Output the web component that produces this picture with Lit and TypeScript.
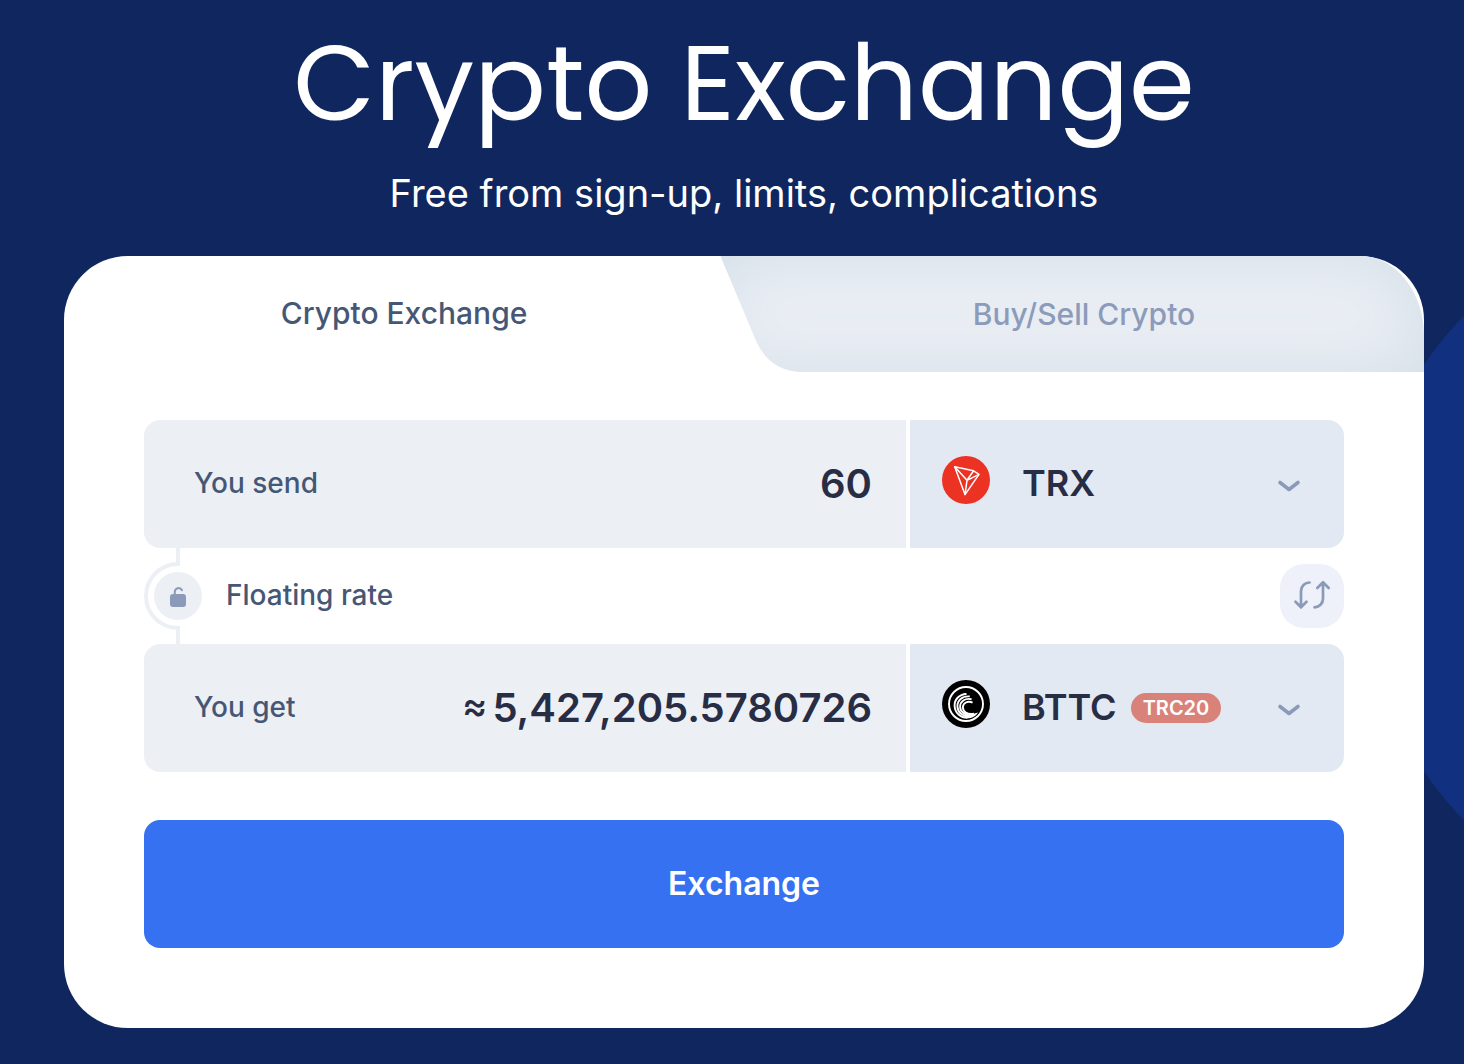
import { LitElement, html, css, svg } from "lit";
import { customElement, property, state } from "lit/decorators.js";

const tronLogo = svg`
  <circle cx="24" cy="24" r="24" fill="#eb3223" />
  <g fill="none" stroke="#fff" stroke-width="1.5" stroke-linejoin="round">
    <path d="M12.7 10.8 31.6 14.8 37 18.4 23 38.6Z" />
    <path d="M12.7 10.8 25 24.3 31.6 14.8M25 24.3 37 18.4M25 24.3 23 38.6" />
  </g>`;

const bttcLogo = svg`
  <circle cx="24" cy="24" r="24" fill="#000" />
  <circle cx="24" cy="24" r="17" fill="none" stroke="#fff" stroke-width="1.9" />
  <g fill="none" stroke="#fff" stroke-width="1.9">
    <path d="M24.5 14C17 14.4 12.2 19.6 12.6 26 13 33 18.4 37.8 25.5 37.8" />
    <path d="M27.8 16.4C20 15.8 15.2 20.6 15.4 26.4 15.6 32.4 20.8 36.8 27.5 36.6" />
    <path d="M29.6 19.2C22.8 17.8 18.1 21.6 18.1 26.8 18.1 31.8 23 35.8 30 35" />
    <path d="M30.6 22.6C25.6 20.6 21 22.8 20.9 27.2 20.8 31.4 25 34.8 32 33.6" />
  </g>
  <path d="M21.5 29.5C23.5 33.4 29 35 36 32.4 33.4 36.8 28.4 39 23 38Z" fill="#fff" />`;

@customElement("currency-picker")
export class CurrencyPicker extends LitElement {
  @property() code = "";
  @property() network = "";
  @property() label = "";

  static styles = css`
    :host {
      display: flex;
      align-items: center;
      min-width: 0;
      padding: 0 43px 0 32px;
      background: #e2e9f3;
      border-radius: 0 16px 16px 0;
    }
    .logo {
      flex: none;
      width: 48px;
      height: 48px;
      margin: 0 32px 8px 0;
    }
    select {
      appearance: none;
      field-sizing: content;
      margin: 0;
      padding: 0 0 2px;
      border: 0;
      background: none;
      color: #272d45;
      font: 600 36px/48px Inter, "Liberation Sans", sans-serif;
      cursor: pointer;
    }
    .network {
      margin-left: 14px;
      padding: 0 12px;
      border-radius: 15px;
      background: #d9827a;
      color: #fff;
      font: 600 20px/30px Inter, "Liberation Sans", sans-serif;
    }
    .chevron {
      flex: none;
      width: 24px;
      height: 14px;
      margin: 4px 0 0 auto;
    }
  `;

  render() {
    return html`
      <svg class="logo" viewBox="0 0 48 48" aria-hidden="true">
        ${this.code === "TRX" ? tronLogo : bttcLogo}
      </svg>
      <select aria-label=${this.label}>
        <option>${this.code}</option>
      </select>
      ${this.network ? html`<span class="network">${this.network}</span>` : ""}
      <svg class="chevron" viewBox="0 0 24 14" aria-hidden="true">
        <path d="M3 3.5 12 10.5 21 3.5" fill="none" stroke="#8b9ab8" stroke-width="3.6"
          stroke-linecap="round" stroke-linejoin="round" />
      </svg>
    `;
  }
}

@customElement("app-root")
export class AppRoot extends LitElement {
  @state() private amount = "60";

  static styles = css`
    :host {
      display: block;
      box-sizing: border-box;
      min-height: 100vh;
      padding: 23px 40px 36px 64px;
      background:
        radial-gradient(
          circle at calc(100% + 259px) 568px,
          #123080 361px,
          transparent 362px
        ),
        #10265e;
      color: #fff;
      font-family: Inter, "Liberation Sans", sans-serif;
    }
    * {
      box-sizing: border-box;
    }
    button,
    input {
      margin: 0;
      border: 0;
      font-family: inherit;
    }
    button {
      cursor: pointer;
    }
    header {
      text-align: center;
    }
    h1 {
      margin: 0;
      font: 400 106px/120px Poppins, Inter, "Liberation Sans", sans-serif;
    }
    .tagline {
      margin: 24px 0 0;
      font-size: 38px;
      line-height: 52px;
    }
    .card {
      margin-top: 37px;
      border-radius: 64px;
      background: #fff;
    }
    .tabs {
      display: grid;
      grid-template-columns: 1fr 1fr;
      height: 116px;
    }
    .tab {
      padding: 0 0 2px;
      background: none;
      color: #465776;
      font-size: 30px;
      font-weight: 500;
      line-height: 40px;
    }
    .tab-idle {
      display: flex;
      align-items: center;
      margin-left: -24px;
      padding: 0;
      border-top-right-radius: 64px 80px;
      background: #ebeff4;
      box-shadow: inset 0 0 72px #d3dee8;
      color: #8c9bb9;
    }
    .slant {
      flex: none;
      width: 84px;
      height: 116px;
    }
    .tab-label {
      flex: 1;
      padding-right: 60px;
    }
    .form {
      display: flex;
      flex-direction: column;
      padding: 48px 80px 80px;
    }
    .row {
      display: grid;
      grid-template-columns: minmax(0, 381fr) minmax(0, 217fr);
      gap: 4px;
      height: 128px;
    }
    .field {
      display: flex;
      align-items: center;
      padding: 0 34px 0 50px;
      border-radius: 16px 0 0 16px;
      background: #eceff4;
      color: #272d45;
    }
    label,
    .rate {
      color: #465776;
      font-size: 28px;
      font-weight: 500;
      line-height: 40px;
    }
    label,
    .rate-label {
      padding-bottom: 2px;
    }
    .amount {
      flex: 1;
      min-width: 0;
      padding: 0;
      background: none;
      color: #272d45;
      font-size: 40px;
      font-weight: 600;
      line-height: 48px;
      text-align: right;
    }
    .approx {
      margin-right: 5px;
      font-size: 38px;
      font-weight: 500;
      font-feature-settings: "case";
    }
    .middle {
      display: flex;
      align-items: center;
      height: 96px;
    }
    .rate {
      display: flex;
      align-items: center;
      gap: 24px;
      padding: 0;
      background: none;
    }
    .link {
      display: block;
      width: 58px;
      height: 96px;
    }
    .swap {
      width: 64px;
      height: 64px;
      margin-left: auto;
      padding: 0;
      border-radius: 24px;
      background: #eef1f9;
    }
    .swap svg {
      display: block;
    }
    .submit {
      height: 128px;
      margin-top: 48px;
      padding: 0 0 2px;
      border-radius: 16px;
      background: #3671f2;
      color: #fff;
      font-size: 32px;
      font-weight: 600;
    }
  `;

  private onAmount(e: Event) {
    this.amount = (e.target as HTMLInputElement).value;
  }

  render() {
    return html`
      <header>
        <h1>Crypto Exchange</h1>
        <p class="tagline">Free from sign-up, limits, complications</p>
      </header>
      <main class="card">
        <div class="tabs" role="tablist">
          <button class="tab" role="tab" aria-selected="true">Crypto Exchange</button>
          <button class="tab tab-idle" role="tab" aria-selected="false">
            <svg class="slant" viewBox="0 0 84 116" aria-hidden="true">
              <path d="M-1-1H0L34 80C43 103 58 116 84 116V117H-1Z" fill="#fff" />
            </svg>
            <span class="tab-label">Buy/Sell Crypto</span>
          </button>
        </div>
        <form class="form" @submit=${(e: Event) => e.preventDefault()}>
          <div class="row">
            <div class="field">
              <label for="send">You send</label>
              <input id="send" class="amount" inputmode="decimal"
                .value=${this.amount} @input=${this.onAmount} />
            </div>
            <currency-picker code="TRX" label="Currency you send"></currency-picker>
          </div>
          <div class="middle">
            <button class="rate" type="button">
              <svg class="link" viewBox="0 0 58 96" aria-hidden="true">
                <path d="M34 0V16A32 32 0 0 0 34 80V96" fill="none" stroke="#eceff4" stroke-width="4" />
                <circle cx="34" cy="48" r="24" fill="#eceff4" />
                <rect x="26" y="46" width="16" height="13" rx="3" fill="#8b9ab8" />
                <path d="M30.8 47V43.6A3.8 3.8 0 0 1 38 42.2" fill="none" stroke="#8b9ab8"
                  stroke-width="2" stroke-linecap="round" />
              </svg>
              <span class="rate-label">Floating rate</span>
            </button>
            <button class="swap" type="button" aria-label="Swap currencies">
              <svg width="64" height="64" viewBox="0 0 64 64" fill="none" stroke="#8b9ab8"
                stroke-width="2.7" stroke-linecap="round" stroke-linejoin="round">
                <path d="M29.5 18.5A8.5 8.5 0 0 0 21 27V43.5M15.5 37.8 21 43.3 26.5 37.8" />
                <path d="M34.5 43.3A8.5 8.5 0 0 0 43 34.8V18.3M37.3 24 43 18.3 48.7 24" />
              </svg>
            </button>
          </div>
          <div class="row">
            <div class="field">
              <label for="get">You get</label>
              <output id="get" class="amount"><span class="approx">≈</span>5,427,205.5780726</output>
            </div>
            <currency-picker code="BTTC" network="TRC20" label="Currency you get"></currency-picker>
          </div>
          <button class="submit">Exchange</button>
        </form>
      </main>
    `;
  }
}
